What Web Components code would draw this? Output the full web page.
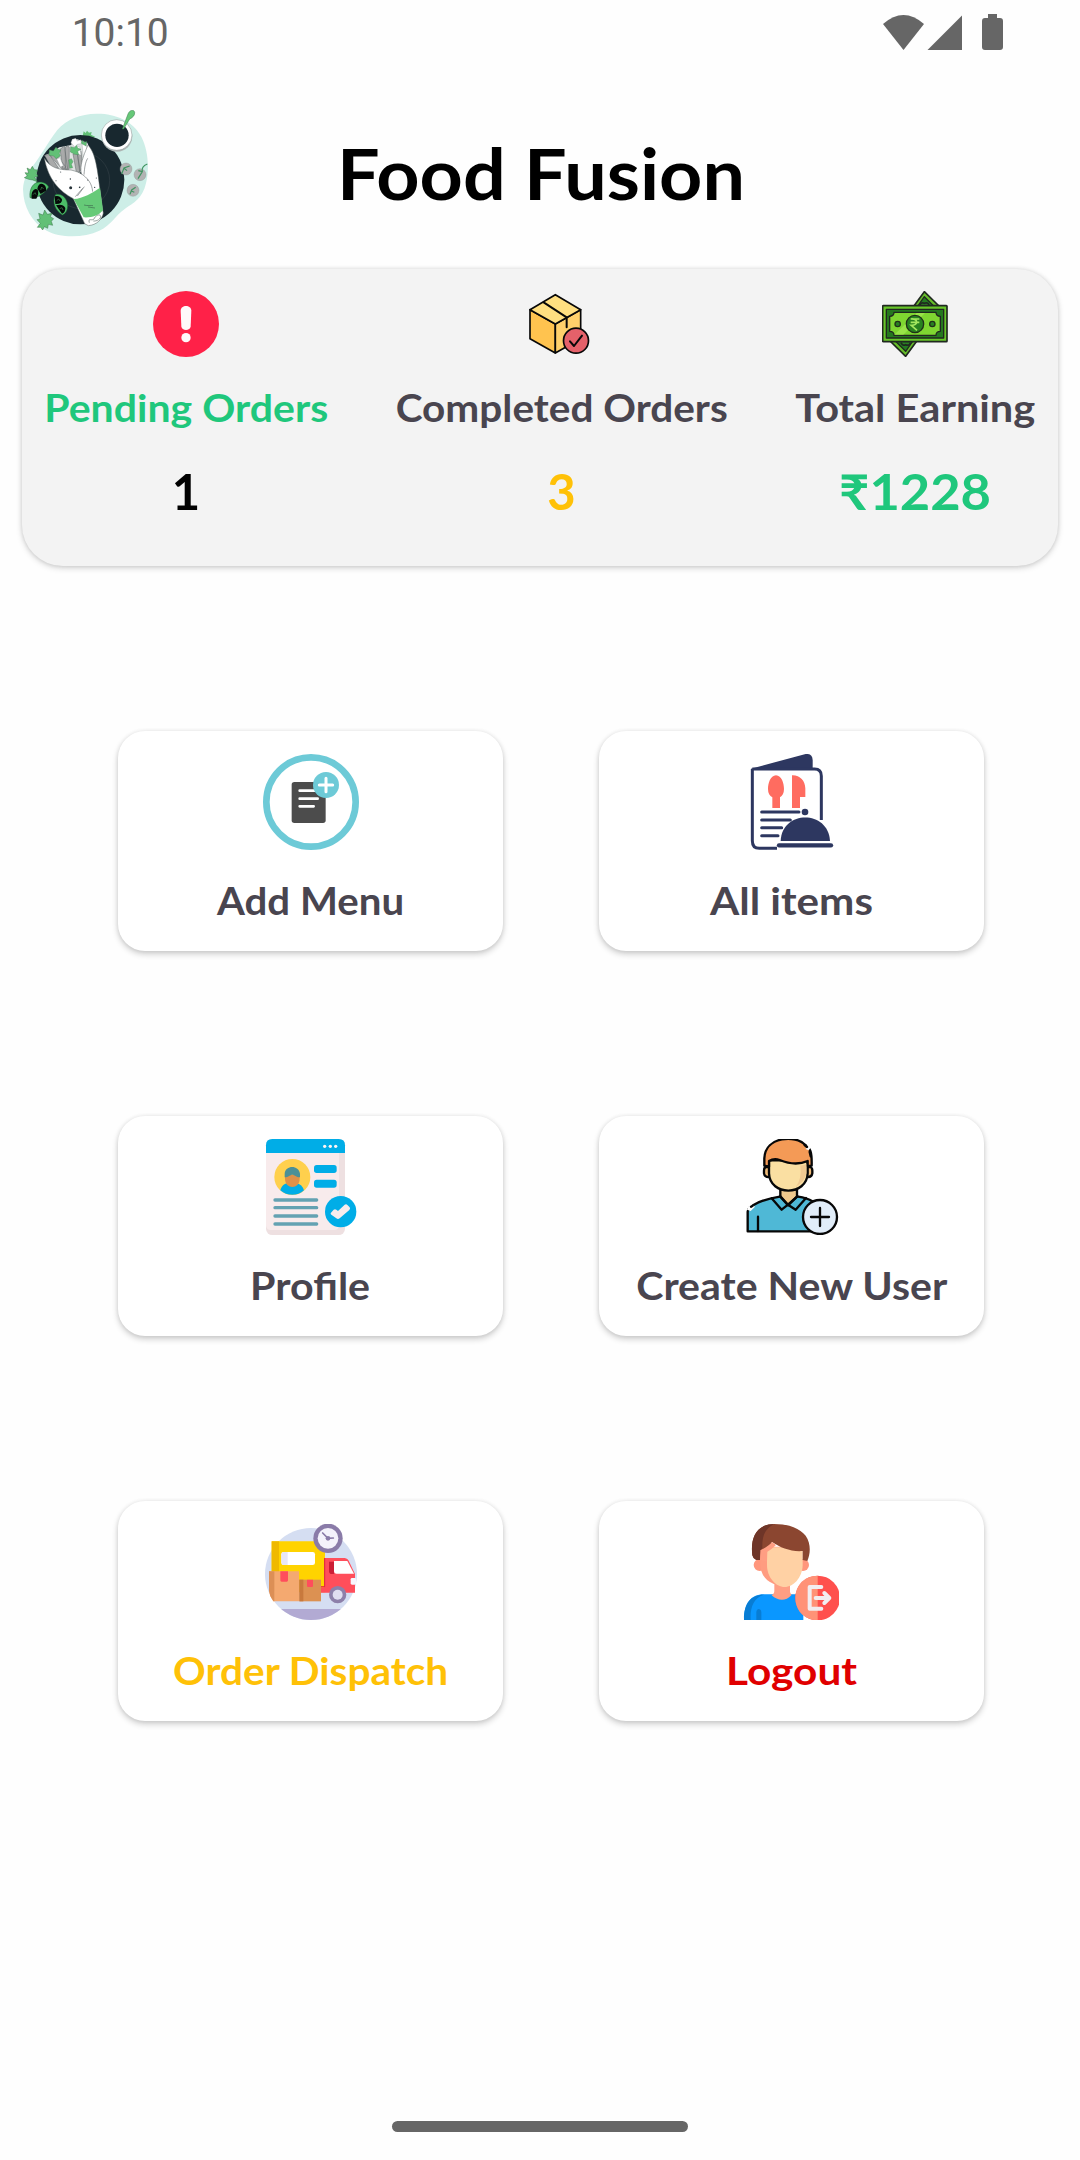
<!DOCTYPE html>
<html lang="en">
<head>
<meta charset="utf-8">
<title>Food Fusion</title>
<style>
html,body{margin:0;padding:0;background:#fefefe;font-family:Lato,"Open Sans","Noto Sans",sans-serif}
</style>
</head>
<body>
<admin-screen></admin-screen>

<template id="ic-logo"><svg viewBox="60 60 390 384">
<path d="M290 71C345 70 398 92 424 140C446 182 448 240 438 280C428 325 400 340 375 356C345 376 335 405 298 422C250 445 180 444 140 422C95 398 70 350 69 298C69 262 90 240 108 215C128 188 142 160 172 120C200 88 240 72 290 71Z" fill="#cdeee7"/>
<path d="M248 138l3-14 6 5 4-7 6 6 8-2-2 8 12 6-10 8z" fill="#62c076"/>
<ellipse cx="241" cy="269" rx="132" ry="134" fill="#18282f"/><circle cx="244" cy="271" r="85" fill="none" stroke="#3a474d" stroke-width="1.5"/>
<circle cx="351" cy="139" r="46" fill="#aeb6b5"/><circle cx="350" cy="135" r="46" fill="#fff" stroke="#8b9694" stroke-width="1.5"/><circle cx="351" cy="136" r="35" fill="#18282f"/>
<path d="M367 117L384 72C390 58 402 58 404 67C405 76 398 83 389 87L371 117Z" fill="#66c878" stroke="#39764a" stroke-width="1.5"/>
<path d="M134 196L150 190L178 172L214 165L216 148L232 148L262 158L270 178L264 225L240 248L165 240Z" fill="#dfe2e1"/>
<g fill="#a9aaaa" stroke="#5f6769" stroke-width="1.5"><path d="M134 196l14-3 28 42-22-2zM150 196l12-8 36 43-10 8zM180 178l13-10 10 68-14 3zM196 172q6-9 12 0l-1 66-11 1zM219 192l12-4 10 56-12 2zM232 186l11-3 5 50-9 12z"/></g>
<path d="M170 206l10-3 10 24-9 4zM226 166l14 6 3 24-12-5zM246 160l10-2 6 20-12 26z" fill="#fff" stroke="#8a9191"/>
<path d="M148 179l12 4 8-12 5 7 9 2-4 10 3 8-13 8-7-8-14-2zM212 170l12 3 4-11 5 12 10 4-10 6 3 10-12-1-13-7zM236 153l5 6 8-9 1 8 10-4-2 14-15-8zM206 210l8-4 5 9-5 8 4 10-9 2z" fill="#62c076" stroke="#37734a" stroke-width="1"/>
<path d="M213 158l4-10 10-3 5 8 10-4 2 12-12 2-8 8z" fill="#fff" stroke="#8a9191"/>
<path d="M133 204C150 235 180 240 213 240C229 244 241 249 244 252C239 226 249 200 264 165C280 184 289 205 299 292C305 330 306 350 310 369C307 388 290 405 265 407L254 401L220 326C178 304 144 268 133 204Z" fill="#fff" stroke="#56605f" stroke-width="1.5"/>
<path d="M240 249C265 264 276 282 278 305M252 254C254 230 256 217 263 205M226 320L248 295M232 318L253 290" fill="none" stroke="#424b4d" stroke-width="1.5"/>
<g fill="#263238"><circle cx="212" cy="293" r="4.5"/><circle cx="211" cy="267" r="2"/><circle cx="239" cy="292" r="2.5"/><circle cx="182" cy="246" r="1.5"/><circle cx="168" cy="272" r="1.5"/><circle cx="284" cy="292" r="2"/><circle cx="289" cy="264" r="1.5"/><circle cx="263" cy="270" r="1.5"/></g>
<path d="M221 327C250 325 276 309 300 293L309 361C294 379 275 383 251 382Z" fill="#66ca78"/><path d="M252 345c10 3 20 1 27 2m-15 4l21 3M268 398c-5-16 8-4 14-11 3-9 16-17 20-9 1 9-11 16-22 15" fill="none" stroke="#334b40" stroke-width="1.5"/>
<g stroke="#2c653b" stroke-width="1.3" fill="#62c076"><path d="M73 263l9-5-7-10 11 1-5-15 10 5 6-10 6 10 10 1-4 10 5 9-10 3 8 13-14-5-12-2z"/><path d="M112 412l9-12-10-11 9-2-4-17 13 5 5-15 8 13 14-3-5 10 10 6-7 8 4 12-13-3-2 12-10-5-5 10-6-8z"/></g>
<g><path d="M90 323C87 293 102 276 120 276C133 276 142 283 146 291C135 308 114 327 90 323Z" fill="#4cbd68" stroke="#1c5a30" stroke-width="1.5"/><path d="M95 326C92 302 105 292 113 299Q118 308 109 326ZM112 296Q116 278 128 282Q140 287 138 302L122 312Z" fill="#050808"/><path d="M99 314l6-6 3 6M122 300l3-9 6 6" fill="none" stroke="#3c8a50" stroke-width="2"/></g>
<g><path d="M166 314C187 307 204 329 203 349C202 365 194 373 187 375C166 361 155 338 166 314Z" fill="#4cbd68" stroke="#1c5a30" stroke-width="1.5"/><path d="M164 319Q178 314 186 328Q188 343 166 342ZM168 346Q188 340 196 354Q196 368 186 371Z" fill="#050808"/><path d="M170 332l6-5 4 6M179 356l7-3 3 7" fill="none" stroke="#3c8a50" stroke-width="2"/></g>
<g fill="#b2b3b3" stroke="#858e8c"><circle cx="378" cy="237" r="18"/><circle cx="420" cy="254" r="18"/><circle cx="399" cy="301" r="18"/></g>
<g fill="none" stroke="#3f9460" stroke-width="3.5"><path d="M365 252l7-18 17-6m-18 6l10 8M414 266l13-21c-3-12 3-18 15-23m-15 23l-12-3M390 313l5-13 12-8m-13 11l9 4"/></g>
</svg></template>

<template id="ic-alert"><svg viewBox="39 33 198 198"><circle cx="138" cy="132" r="99" fill="#ff2148"/><path d="M122 92C122 73 154 73 154 92L152 139C151 154 125 154 124 139Z" fill="#fff8fa"/><circle cx="138" cy="173" r="14" fill="#fff8fa"/></svg></template>

<template id="ic-box"><svg viewBox="54 33 198 198"><g stroke="#080808" stroke-width="5" stroke-linejoin="round" stroke-linecap="round"><path d="M57 89L133 132V219L57 176Z" fill="#ffc34f"/><path d="M209 89L133 132V219L209 176Z" fill="#ffd06b"/><path d="M57 89L133 44L209 89L133 132Z" fill="#ffdf80"/><path d="M98 67L167 112V142" fill="none" stroke-width="6"/><circle cx="195" cy="182" r="37.500" fill="#e5616a"/><path d="M177 184L189 198L213 167" fill="none" stroke-width="6"/></g></svg></template>

<template id="ic-money"><svg viewBox="51 33 198 198"><g stroke="#202820" stroke-linejoin="round"><path d="M178 35L228 84L122 229L72 180Z" fill="#65bd29" stroke-width="5"/><path d="M178 50L212 84L122 214L88 180Z" fill="#237b20" stroke-width="4"/><path d="M164 76q5-11 14-6q11-5 14 6M108 188q5 11 14 6q11 5 14-6" fill="#2b8024" stroke-width="5"/><rect x="53" y="77" width="193" height="108" rx="2" fill="#67c529" stroke-width="5"/><rect x="64" y="88" width="172" height="86" fill="#25781e" stroke-width="4"/><path d="M87 97H213Q213 109 226 109V154Q213 154 213 166H87Q87 154 74 154V109Q87 109 87 97Z" fill="#7fd631" stroke-width="4"/></g><path d="M155 99h25l-65 65H88z" fill="#a8eb54" opacity=".65"/><g stroke="#203019" stroke-width="4"><circle cx="150" cy="132" r="26" fill="#28821f"/><circle cx="98" cy="132" r="8" fill="#288021"/><circle cx="202" cy="132" r="8" fill="#288021"/></g><path d="M137 117H163M137 127H163M138 117C161 115 160 137 139 136L156 151" fill="none" stroke="#a3e75f" stroke-width="5"/></svg></template>

<template id="ic-menu"><svg viewBox="489 117 288 288"><circle cx="633" cy="261" r="134" fill="#fff" stroke="#6dcad7" stroke-width="20"/><rect x="575" y="201" width="102" height="123" rx="8" fill="#4c4c4c"/><path d="M599 227H650M599 251H653M599 274H641" stroke="#fff" stroke-width="8" stroke-linecap="round"/><circle cx="678" cy="210" r="39" fill="#6dcad7"/><path d="M678 190V230M658 210H698" stroke="#fff" stroke-width="9" stroke-linecap="round"/></svg></template>

<template id="ic-items"><svg viewBox="39 42 288 288"><path d="M63 86L227 42Q247 40 248 60V88H63Z" fill="#2d3760"/><path d="M67 87H254Q274 87 274 108V240M67 87V302Q67 325 88 325H141" fill="none" stroke="#2d3760" stroke-width="9"/><path d="M138 106C155 107 162 130 162 147C162 160 157 168 150 172V204H127V172C119 168 114 160 114 147C114 130 121 107 138 106ZM186 106C210 105 225 122 226 145V171H210V204H186Z" fill="#ff6c60"/><path d="M95 216H207M95 240H181M95 263H155M95 287H144" stroke="#2d3760" stroke-width="9" stroke-linecap="round"/><circle cx="225" cy="216" r="10" fill="#2d3760"/><path d="M152 303C155 210 295 208 300 303Z" fill="#2d3760"/><path d="M147 316H303" stroke="#2d3760" stroke-width="13" stroke-linecap="round"/></svg></template>

<template id="ic-profile"><svg viewBox="39 42 288 288"><rect x="48" y="42" width="237" height="288" rx="19" fill="#eee0e1"/><path d="M48 70H267V300Q267 315 252 315H63Q48 315 48 300Z" fill="#f8ebec"/><path d="M48 84V61Q48 42 67 42H266Q285 42 285 61V84Z" fill="#00ade7"/><g fill="#fff5f5"><circle cx="224" cy="64" r="5"/><circle cx="241" cy="64" r="5"/><circle cx="257" cy="64" r="5"/></g><circle cx="127" cy="156" r="54" fill="#ffd04d"/><path d="M91 196C95 180 105 175 117 174H138C151 177 159 184 162 196C143 214 111 214 91 196Z" fill="#00ade7"/><path d="M105 149H149V161C149 194 105 194 105 161Z" fill="#df9147"/><path d="M104 157V146C106 120 146 119 150 146V157C139 157 133 149 127 149C121 149 115 157 104 157Z" fill="#4b9097"/><rect x="192" y="120" width="68" height="24" rx="8" fill="#00ade7"/><rect x="192" y="164" width="68" height="24" rx="8" fill="#00ade7"/><path d="M75 225H200M75 248H200M75 273H200M75 297H200" stroke="#64a2b2" stroke-width="10" stroke-linecap="round"/><circle cx="272" cy="260" r="47" fill="#00ade7"/><path d="M243 263L251 254Q255 251 259 254L264 258L284 239Q289 236 293 241L299 247Q302 251 298 255L269 280Q264 284 259 280L244 269Q240 266 243 263Z" fill="#f8eced"/></svg></template>

<template id="ic-user"><svg viewBox="39 42 288 288"><g stroke="#070707" stroke-width="7" stroke-linecap="round" stroke-linejoin="round"><path d="M53 319V260C55 248 60 246 72 239C96 225 119 220 149 215H204C218 217 235 221 247 229V319Z" fill="#4fb8d6"/><path d="M151 193V215L174 241L201 215V193Z" fill="#f0c98d"/><path d="M116 126H108Q102 127 102 137V145Q104 157 118 156M233 126H241Q247 128 247 137V145Q245 157 233 156" fill="#efbb79"/><path d="M117 105V145C119 214 231 214 233 145V108Z" fill="#fadfa2"/><path d="M103 122V100C106 32 199 30 225 59C241 68 246 80 245 122L233 123V108C198 123 166 112 149 105C137 101 127 102 117 108V125Z" fill="#f49a56"/><path d="M125 220L155 254L174 239L197 254L228 219M151 214L174 239L202 214M84 275V318" fill="none"/><circle cx="270" cy="276" r="51" fill="#e1edf9"/><path d="M270 249V303M243 276H297" fill="none"/></g><path d="M211 121Q220 122 229 117V145Q225 169 197 186Q216 163 211 121Z" fill="#efc992"/><path d="M56 242L63 236L75 245L62 258L51 254Z" fill="#fff"/><path d="M234 55L243 67L236 76L227 72Z" fill="#fff"/><path d="M68 242l-5 3M224 60l7 6M239 81l3 13" stroke="#070707" stroke-width="7" stroke-linecap="round"/></svg></template>

<template id="ic-truck"><svg viewBox="39 42 288 288"><defs><clipPath id="disk"><circle cx="183" cy="192" r="138"/></clipPath></defs><circle cx="183" cy="192" r="138" fill="#d5def2"/><path d="M40 297H320V340H40Z" fill="#b2aad3" clip-path="url(#disk)"/><path d="M65 94H225V247H65Z" fill="#ffd300"/><path d="M65 94H87V190H65Z" fill="#efb900"/><rect x="94" y="126" width="101" height="39" rx="7" fill="#fff"/><path d="M113 126H101Q94 126 94 133V158Q94 165 101 165H113Z" fill="#e7e6f5"/><path d="M222 144H284Q294 145 299 158L315 192V248H212V232H222Z" fill="#ff4e5b"/><path d="M213 230H224V144" fill="none" stroke="#df293c" stroke-width="3"/><path d="M252 153H292L312 191H260Q252 191 252 182Z" fill="#fff"/><path d="M237 155H252V192H242Q237 190 237 184Z" fill="#cc1e35"/><rect x="302" y="204" width="16" height="20" rx="4" fill="#f8f6fd"/><circle cx="263" cy="254" r="26" fill="#8d80aa"/><circle cx="263" cy="254" r="15" fill="#e0def0"/><circle cx="234" cy="85" r="44" fill="#8a7ba8"/><circle cx="234" cy="85" r="31" fill="#f4f2fb"/><path d="M218 69L234 85L250 84" fill="none" stroke="#8a7ba8" stroke-width="5" stroke-linecap="round"/><circle cx="234" cy="85" r="7" fill="#8a7ba8"/><path d="M57 184H147V274H70Q59 260 57 242Z" fill="#f4a970"/><path d="M57 184H73V274H70Q59 260 57 242Z" fill="#dc8f56"/><path d="M148 209H213V274H148Z" fill="#dc9152"/><path d="M148 209H160V274H148Z" fill="#c8793d"/><path d="M91 184H114V211Q114 215 110 215H95Q91 215 91 211ZM171 209H189V228Q189 231 186 231H174Q171 231 171 228Z" fill="#ff4d5c"/></svg></template>

<template id="ic-logout"><svg viewBox="39 42 288 288"><path d="M42 330C41 283 61 253 101 253H220V330Z" fill="#0a97ff"/><path d="M42 330C41 283 61 253 103 254C70 263 60 293 62 330Z" fill="#087dd4"/><path d="M79 330V306Q80 297 87 297Q94 298 94 306V330Z" fill="#087dd4"/><path d="M133 215H180V245C181 252 186 253 184 256C167 275 143 273 125 256C133 251 133 246 133 240Z" fill="#ff9e83"/><circle cx="89" cy="165" r="18" fill="#ff967c"/><circle cx="219" cy="165" r="18" fill="#ff967c"/><path d="M89 110H176V225C122 232 96 204 91 170Z" fill="#ff9c80"/><path d="M111 112H218V165C217 204 189 231 164 231C137 231 111 202 111 165Z" fill="#ffd1a4"/><path d="M67 136C61 86 77 43 132 42C179 42 210 56 227 77C244 101 241 133 232 153L218 150V123C184 126 151 113 126 96C119 114 90 117 90 133V150H79Q69 146 67 136Z" fill="#8b4630"/><path d="M67 136C61 86 77 43 132 42C108 56 96 72 97 113Q91 121 90 150H79Q69 146 67 136Z" fill="#6e3528"/><path d="M91 121Q118 107 126 96L138 105Q120 122 112 125L111 155L91 149Z" fill="#ff9e83"/><circle cx="263" cy="264" r="67" fill="#ff504d"/><path d="M263 197V331C173 330 174 198 263 197Z" fill="#ff9277"/><path d="M274 231H239V296H274M257 264H295M283 249L298 264L283 279" fill="none" stroke="#f2edf0" stroke-width="12" stroke-linecap="round" stroke-linejoin="round"/></svg></template>

<script>
class AppIcon extends HTMLElement {
  connectedCallback() {
    const root = this.attachShadow({ mode: 'open' });
    root.innerHTML = '<style>:host{display:block;flex:none}svg{display:block;width:100%;height:100%}</style>';
    root.append(document.getElementById('ic-' + this.getAttribute('name')).content.cloneNode(true));
  }
}
customElements.define('app-icon', AppIcon);

/* Text line whose glyphs are widened or narrowed so the line fills its given width. */
class FittedText extends HTMLElement {
  connectedCallback() {
    const root = this.attachShadow({ mode: 'open' });
    root.innerHTML = '<style>:host{display:flex;flex:none;justify-content:center;white-space:nowrap}span{display:block;flex:none}</style><span><slot></slot></span>';
    const span = root.querySelector('span');
    const width = Number(this.getAttribute('width'));
    this.style.width = width + 'px';
    if (this.textContent.length > 1) {
      span.style.transform = `scaleX(${width / span.getBoundingClientRect().width})`;
    }
  }
}
customElements.define('fitted-text', FittedText);

class StatusBar extends HTMLElement {
  connectedCallback() {
    this.attachShadow({ mode: 'open' }).innerHTML = `<style>
:host{display:flex;height:66px;box-sizing:border-box;padding:0 77px 0 72px;justify-content:space-between;align-items:flex-start;color:#666;font:400 39.500px/66px Roboto,sans-serif}
svg{display:block;margin-top:14px}
</style><fitted-text width="97">10:10</fitted-text>
<svg width="121" height="37" viewBox="882 14 121 37" fill="#666"><path d="M883 24Q903.500 6 924 24L903.500 50Z"/><path d="M962 15.500V50H927.500Z"/><path d="M988 14h9v4h3q3 0 3 3v26q0 3-3 3h-15q-3 0-3-3V21q0-3 3-3h3z"/></svg>`;
  }
}
customElements.define('status-bar', StatusBar);

class PageHeader extends HTMLElement {
  connectedCallback() {
    this.attachShadow({ mode: 'open' }).innerHTML = `<style>
:host{display:flex;height:203px;box-sizing:border-box;padding:44px 20px 0;color:#000;font-weight:700;font-size:71px;line-height:126px}
app-icon{width:130px;height:128px}
fitted-text{margin-left:187px}
</style><app-icon name="logo"></app-icon><fitted-text width="408">${this.getAttribute('label')}</fitted-text>`;
  }
}
customElements.define('page-header', PageHeader);

class StatItem extends HTMLElement {
  connectedCallback() {
    const a = n => this.getAttribute(n);
    this.attachShadow({ mode: 'open' }).innerHTML = `<style>
:host{display:flex;flex-direction:column;align-items:center;font-weight:700}
app-icon{width:66px;height:66px}
.label{margin-top:23px;font-size:38.500px;line-height:54px;color:${a('label-color')}}
.value{margin-top:24px;font-size:49px;line-height:67px;color:${a('value-color')}}
</style><app-icon name="${a('icon')}"></app-icon>
<fitted-text class="label" width="${a('label-width')}">${a('label')}</fitted-text>
<fitted-text class="value" width="${a('value-width')}">${a('value')}</fitted-text>`;
  }
}
customElements.define('stat-item', StatItem);

class StatsCard extends HTMLElement {
  connectedCallback() {
    this.attachShadow({ mode: 'open' }).innerHTML = `<style>
:host{display:flex;justify-content:space-between;box-sizing:border-box;width:1036px;height:297px;margin:0 22px;padding:22px 23px 0 22px;border-radius:41px;background:#f3f3f3;box-shadow:0 2px 6px rgba(0,0,0,.17),0 0 4px rgba(0,0,0,.1)}
</style><slot></slot>`;
  }
}
customElements.define('stats-card', StatsCard);

class ActionCard extends HTMLElement {
  connectedCallback() {
    const a = n => this.getAttribute(n);
    this.attachShadow({ mode: 'open' }).innerHTML = `<style>
:host{display:flex;flex-direction:column;align-items:center;box-sizing:border-box;height:220px;padding-top:23px;border-radius:27px;background:#fff;box-shadow:0 3px 6px rgba(0,0,0,.2),0 0 4px rgba(0,0,0,.07);font-weight:700;font-size:38.500px;line-height:54px;color:${a('color') || '#49454f'}}
app-icon{width:96px;height:96px}
:host(:nth-child(even)) app-icon{margin-right:2px}
fitted-text{margin-top:23px}
</style><app-icon name="${a('icon')}"></app-icon><fitted-text width="${a('width')}">${a('label')}</fitted-text>`;
  }
}
customElements.define('action-card', ActionCard);

class ActionGrid extends HTMLElement {
  connectedCallback() {
    this.attachShadow({ mode: 'open' }).innerHTML = `<style>
:host{display:grid;grid-template-columns:385px 385px;gap:165px 96px;padding:165px 0 0 118px}
</style><slot></slot>`;
  }
}
customElements.define('action-grid', ActionGrid);

class HomeIndicator extends HTMLElement {
  connectedCallback() {
    this.attachShadow({ mode: 'open' }).innerHTML = `<style>
:host{display:flex;justify-content:center;margin-top:auto;padding-bottom:28px}
div{width:296px;height:11px;border-radius:6px;background:#666}
</style><div></div>`;
  }
}
customElements.define('home-indicator', HomeIndicator);

class AdminScreen extends HTMLElement {
  connectedCallback() {
    this.attachShadow({ mode: 'open' }).innerHTML = `<style>
:host{display:flex;flex-direction:column;width:1080px;height:2160px;overflow:hidden;background:#fefefe}
</style>
<status-bar></status-bar>
<page-header label="Food Fusion"></page-header>
<stats-card>
<stat-item icon="alert" label="Pending Orders" label-width="284" label-color="#1fc77c" value="1" value-width="28" value-color="#000"></stat-item>
<stat-item icon="box" label="Completed Orders" label-width="332" label-color="#49454f" value="3" value-width="28" value-color="#ffc107"></stat-item>
<stat-item icon="money" label="Total Earning" label-width="240" label-color="#49454f" value="₹1228" value-width="152" value-color="#1fc77c"></stat-item>
</stats-card>
<action-grid>
<action-card icon="menu" label="Add Menu" width="187"></action-card>
<action-card icon="items" label="All items" width="163"></action-card>
<action-card icon="profile" label="Profile" width="120"></action-card>
<action-card icon="user" label="Create New User" width="311"></action-card>
<action-card icon="truck" label="Order Dispatch" width="275" color="#ffc107"></action-card>
<action-card icon="logout" label="Logout" width="131" color="#e00000"></action-card>
</action-grid>
<home-indicator></home-indicator>`;
  }
}
customElements.define('admin-screen', AdminScreen);
</script>
</body>
</html>
